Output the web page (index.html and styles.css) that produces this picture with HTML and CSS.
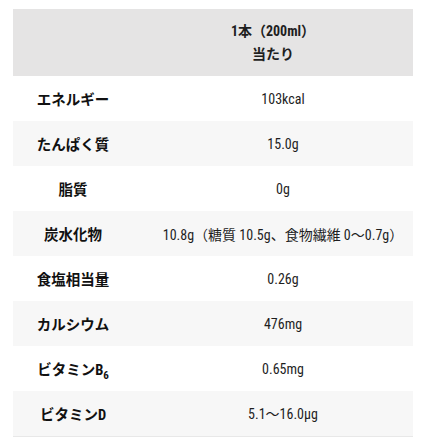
FILE: index.html
```html
<!DOCTYPE html>
<html lang="ja">
<head>
<meta charset="utf-8">
<link rel="stylesheet" href="styles.css">
</head>
<body>
<table class="nutrition">
  <thead>
    <tr>
      <th class="corner"></th>
      <th class="head">1本（200ml）<br>当たり</th>
    </tr>
  </thead>
  <tbody>
    <tr><th>エネルギー</th><td>103kcal</td></tr>
    <tr class="alt"><th>たんぱく質</th><td>15.0g</td></tr>
    <tr><th>脂質</th><td>0g</td></tr>
    <tr class="alt"><th>炭水化物</th><td>10.8g（糖質 10.5g、食物繊維 0〜0.7g）</td></tr>
    <tr><th>食塩相当量</th><td>0.26g</td></tr>
    <tr class="alt"><th>カルシウム</th><td>476mg</td></tr>
    <tr><th>ビタミンB<sub class="sub">6</sub></th><td>0.65mg</td></tr>
    <tr class="alt last"><th>ビタミンD</th><td>5.1〜16.0μg</td></tr>
  </tbody>
</table>
</body>
</html>
```
FILE: styles.css
```css
body {
  margin: 0;
  padding: 9px 0 0 13px;
  background: #ffffff;
  color: #1e1e1e;
  font-family: "Roboto", "Noto Sans CJK JP", sans-serif;
  font-stretch: 75%;
  font-size: 14px;
}

.nutrition {
  width: 400px;
  border-collapse: collapse;
  table-layout: fixed;
}

.nutrition th,
.nutrition td {
  padding: 0;
  text-align: center;
  vertical-align: middle;
}

.nutrition thead tr {
  background: #e5e4e4;
  height: 67px;
}

.corner {
  width: 120px;
}

.head {
  font-weight: 700;
  line-height: 23px;
  padding-left: 20px;
}

.nutrition tbody tr {
  height: 45px;
}

.nutrition tbody th {
  font-weight: 700;
  font-size: 14.5px;
  color: #111111;
}

.nutrition tbody td {
  font-weight: 400;
  padding-left: 20px;
  white-space: nowrap;
}

.nutrition tbody tr.alt {
  background: #f7f7f7;
}

.nutrition tbody tr.last {
  border-bottom: 1px solid #e8e8e8;
}

.sub {
  font-size: 11px;
  vertical-align: -4px;
  line-height: 0;
}
```
